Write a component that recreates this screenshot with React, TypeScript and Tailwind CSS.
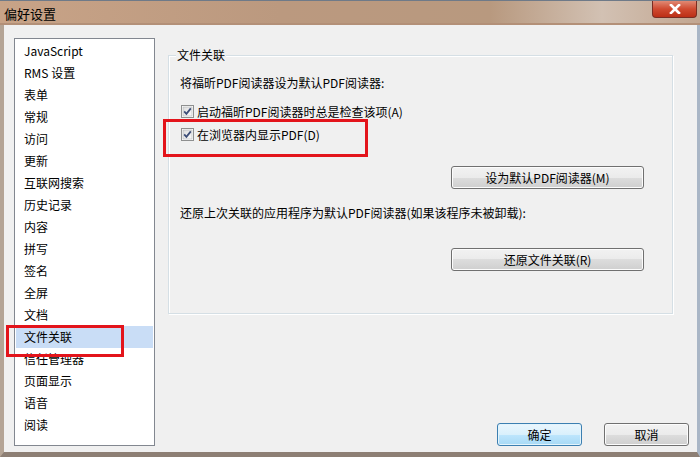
import React from "react";

const font = { fontFamily: '"Noto Sans CJK SC", "Liberation Sans", sans-serif' };

const items = [
  "JavaScript",
  "RMS 设置",
  "表单",
  "常规",
  "访问",
  "更新",
  "互联网搜索",
  "历史记录",
  "内容",
  "拼写",
  "签名",
  "全屏",
  "文档",
  "文件关联",
  "信任管理器",
  "页面显示",
  "语音",
  "阅读",
];

function CheckBox() {
  return (
    <svg width="13" height="13" viewBox="0 0 13 13" className="shrink-0">
      <defs>
        <linearGradient id="cbg" x1="0" y1="0" x2="1" y2="1">
          <stop offset="0" stopColor="#dcdcdc" />
          <stop offset="1" stopColor="#fbfbfb" />
        </linearGradient>
      </defs>
      <rect x="0.5" y="0.5" width="12" height="12" fill="#fff" stroke="#8e8f8f" />
      <rect x="2" y="2" width="9" height="9" fill="url(#cbg)" stroke="#b0b2b4" strokeWidth="0.6" />
      <path d="M3.2 6.4 L5.4 8.8 L9.8 3.4" fill="none" stroke="#3d4e78" strokeWidth="1.8" />
    </svg>
  );
}

function Btn({ children, w, primary }: { children: React.ReactNode; w: string; primary?: boolean }) {
  return (
    <div
      className={
        "h-[23px] rounded-[3px] border flex items-center justify-center text-[12px] leading-none text-black " +
        w +
        (primary
          ? " border-[#3c7fb1] bg-[linear-gradient(#eaf6fd_0%,#d9f0fc_50%,#bee6fd_50%,#a7d9f5_100%)] shadow-[inset_0_0_0_1px_#e3f4fc]"
          : " border-[#707070] bg-[linear-gradient(#f2f2f2_0%,#ebebeb_50%,#dddddd_50%,#cfcfcf_100%)] shadow-[inset_0_0_0_1px_#fcfcfc]")
      }
    >
      {children}
    </div>
  );
}

export default function App() {
  return (
    <div className="w-[700px] h-[457px] flex flex-col overflow-hidden relative bg-[#f0f0f0]" style={font}>
      {/* title bar */}
      <div className="h-[25px] shrink-0 relative flex items-center bg-[linear-gradient(to_right,#c8a387_0%,#bb997f_40%,#b8997f_70%,#d2c1b3_86%,#c2a690_100%)] border-t border-[#6f7a88] shadow-[inset_0_-2px_0_#b39078]">
        <span className="ml-[4px] text-[13px] leading-none text-black">偏好设置</span>
        <div className="absolute right-[3px] top-0 w-[45px] h-[17px] rounded-b-[4px] border border-t-0 border-[#7a2d22] bg-[linear-gradient(#e08a74_0%,#cf4a30_50%,#bc2f16_100%)] flex items-center justify-center">
          <svg width="12" height="10" viewBox="0 0 12 10">
            <path d="M2 1 L10 9 M10 1 L2 9" stroke="#fff" strokeWidth="2.6" strokeLinecap="square" />
          </svg>
        </div>
      </div>

      {/* body */}
      <div className="flex-1 flex border-l-[4px] border-r-[3px] border-b-[5px] border-l-[#b4a495] border-r-[#a9b6c6] border-b-[#8d7f74]">
        <div className="flex-1 flex bg-[#f0f0f0]">
          {/* list */}
          <div className="ml-[10px] mt-[13px] w-[141px] h-[408px] border border-[#828790] bg-white pt-[1px] px-[1px]">
            {items.map((it) => (
              <div
                key={it}
                className={
                  "h-[22px] flex items-center pl-[8px] text-[12px] leading-none text-black " +
                  (it === "文件关联" ? "bg-[#c9ddf6]" : "")
                }
              >
                {it}
              </div>
            ))}
          </div>

          {/* right column */}
          <div className="ml-[13px] flex-1 flex flex-col pr-[8px]">
            <div className="relative mt-[30px] w-[505px] h-[259px] border border-[#d5dfe5] shadow-[inset_1px_1px_0_#ffffff,1px_1px_0_#ffffff] pl-[11px]">
              <span className="absolute -top-[9px] left-[7px] px-[1px] bg-[#f0f0f0] text-[12px] leading-[16px] text-black">
                文件关联
              </span>
              <div className="mt-[19px] h-[16px] flex items-center text-[12px] leading-none">
                将福昕PDF阅读器设为默认PDF阅读器:
              </div>
              <div className="mt-[9px] h-[23px] flex items-center gap-[3px] pl-[1px] text-[12px] leading-none">
                <CheckBox />
                <span>启动福昕PDF阅读器时总是检查该项(A)</span>
              </div>
              <div className="h-[23px] flex items-center gap-[3px] pl-[1px] text-[12px] leading-none">
                <CheckBox />
                <span>在浏览器内显示PDF(D)</span>
              </div>
              <div className="mt-[20px] flex justify-end pr-[28px]">
                <Btn w="w-[193px]">设为默认PDF阅读器(M)</Btn>
              </div>
              <div className="mt-[16px] h-[16px] flex items-center text-[12px] leading-none">
                还原上次关联的应用程序为默认PDF阅读器(如果该程序未被卸载):
              </div>
              <div className="mt-[27px] flex justify-end pr-[28px]">
                <Btn w="w-[193px]">还原文件关联(R)</Btn>
              </div>
            </div>

            <div className="mt-[109px] flex justify-end gap-[22px]">
              <Btn w="w-[85px]" primary>
                确定
              </Btn>
              <Btn w="w-[85px]">取消</Btn>
            </div>
          </div>
        </div>
      </div>

      {/* red highlight boxes */}
      <div className="absolute left-[6px] top-[325px] w-[118px] h-[32px] border-[3px] border-[#e3141b]" />
      <div className="absolute left-[163px] top-[119px] w-[205px] h-[38px] border-[3px] border-[#e3141b]" />
    </div>
  );
}
